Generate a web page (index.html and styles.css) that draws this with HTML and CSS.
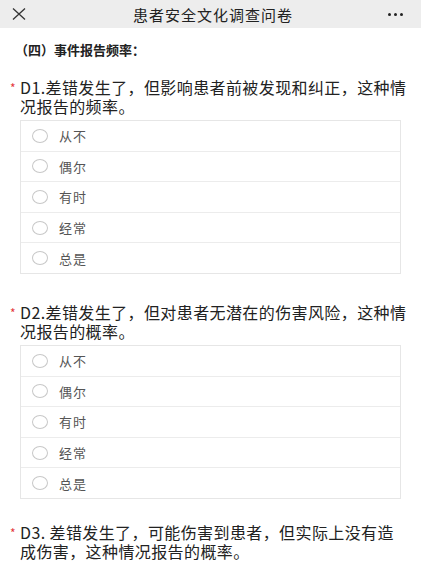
FILE: index.html
```html
<!DOCTYPE html>
<html lang="zh-CN">
<head>
  <meta charset="UTF-8">
  <title>患者安全文化调查问卷</title>
  <link rel="stylesheet" href="styles.css">
</head>
<body>
<div class="topbar">
  <svg class="close" width="14" height="12" viewBox="0 0 14 12">
    <path d="M1 0.5 L13 11.5 M13 0.5 L1 11.5" stroke="#333" stroke-width="1.3" fill="none"/>
  </svg>
  <div class="title">患者安全文化调查问卷</div>
  <div class="more"><span></span><span></span><span></span></div>
</div>

<div class="page">
  <div class="section">（四）事件报告频率：</div>

  <div class="question">
    <div class="q-text"><span class="star">*</span>D1.差错发生了，但影响患者前被发现和纠正，这种情况报告的频率。</div>
    <div class="options">
      <div class="option"><span class="radio"></span>从不</div>
      <div class="option"><span class="radio"></span>偶尔</div>
      <div class="option"><span class="radio"></span>有时</div>
      <div class="option"><span class="radio"></span>经常</div>
      <div class="option"><span class="radio"></span>总是</div>
    </div>
  </div>

  <div class="question">
    <div class="q-text"><span class="star">*</span>D2.差错发生了，但对患者无潜在的伤害风险，这种情况报告的概率。</div>
    <div class="options">
      <div class="option"><span class="radio"></span>从不</div>
      <div class="option"><span class="radio"></span>偶尔</div>
      <div class="option"><span class="radio"></span>有时</div>
      <div class="option"><span class="radio"></span>经常</div>
      <div class="option"><span class="radio"></span>总是</div>
    </div>
  </div>

  <div class="question">
    <div class="q-text"><span class="star">*</span>D3. 差错发生了，可能伤害到患者，但实际上没有造成伤害，这种情况报告的概率。</div>
  </div>
</div>
</body>
</html>
```

FILE: styles.css
```css
body {
  margin: 0;
  font-family: "Noto Sans CJK SC", "Noto Sans", sans-serif;
  color: #222;
  background: #fff;
}

.topbar {
  height: 28px;
  background: #ededed;
  display: flex;
  align-items: center;
  padding: 0 18px 0 12px;
}
.topbar .close {
  flex-shrink: 0;
}
.topbar .title {
  flex: 1;
  text-align: center;
  font-size: 15px;
  letter-spacing: 1px;
  color: #222;
  padding-left: 12px;
}
.more {
  display: flex;
  gap: 3px;
}
.more span {
  width: 3px;
  height: 3px;
  background: #222;
  border-radius: 50%;
}

.page {
  padding: 12px 20px 0 20px;
}

.section {
  font-size: 13px;
  font-weight: bold;
  margin-left: -5px;
  line-height: 20px;
}

.question {
  margin-top: 29px;
}
.section + .question {
  margin-top: 18px;
}
.question:last-child {
  margin-top: 24px;
}
.q-text {
  position: relative;
  font-size: 16px;
  line-height: 19px;
  letter-spacing: 0.4px;
  margin-right: -8px;
  color: #222;
}
.star {
  position: absolute;
  left: -10px;
  top: 0;
  color: #e4393c;
  font-size: 12px;
}

.options {
  margin-top: 4px;
  border: 1px solid #e6e6e6;
}
.option {
  height: 29.6px;
  display: flex;
  align-items: center;
  font-size: 13px;
  letter-spacing: 1px;
  color: #555;
  border-top: 1px solid #ececec;
}
.option:first-child {
  border-top: none;
}
.radio {
  width: 14px;
  height: 12px;
  border: 1px solid #c8c8c8;
  border-radius: 50%;
  margin: 0 11px 0 11px;
}
```
